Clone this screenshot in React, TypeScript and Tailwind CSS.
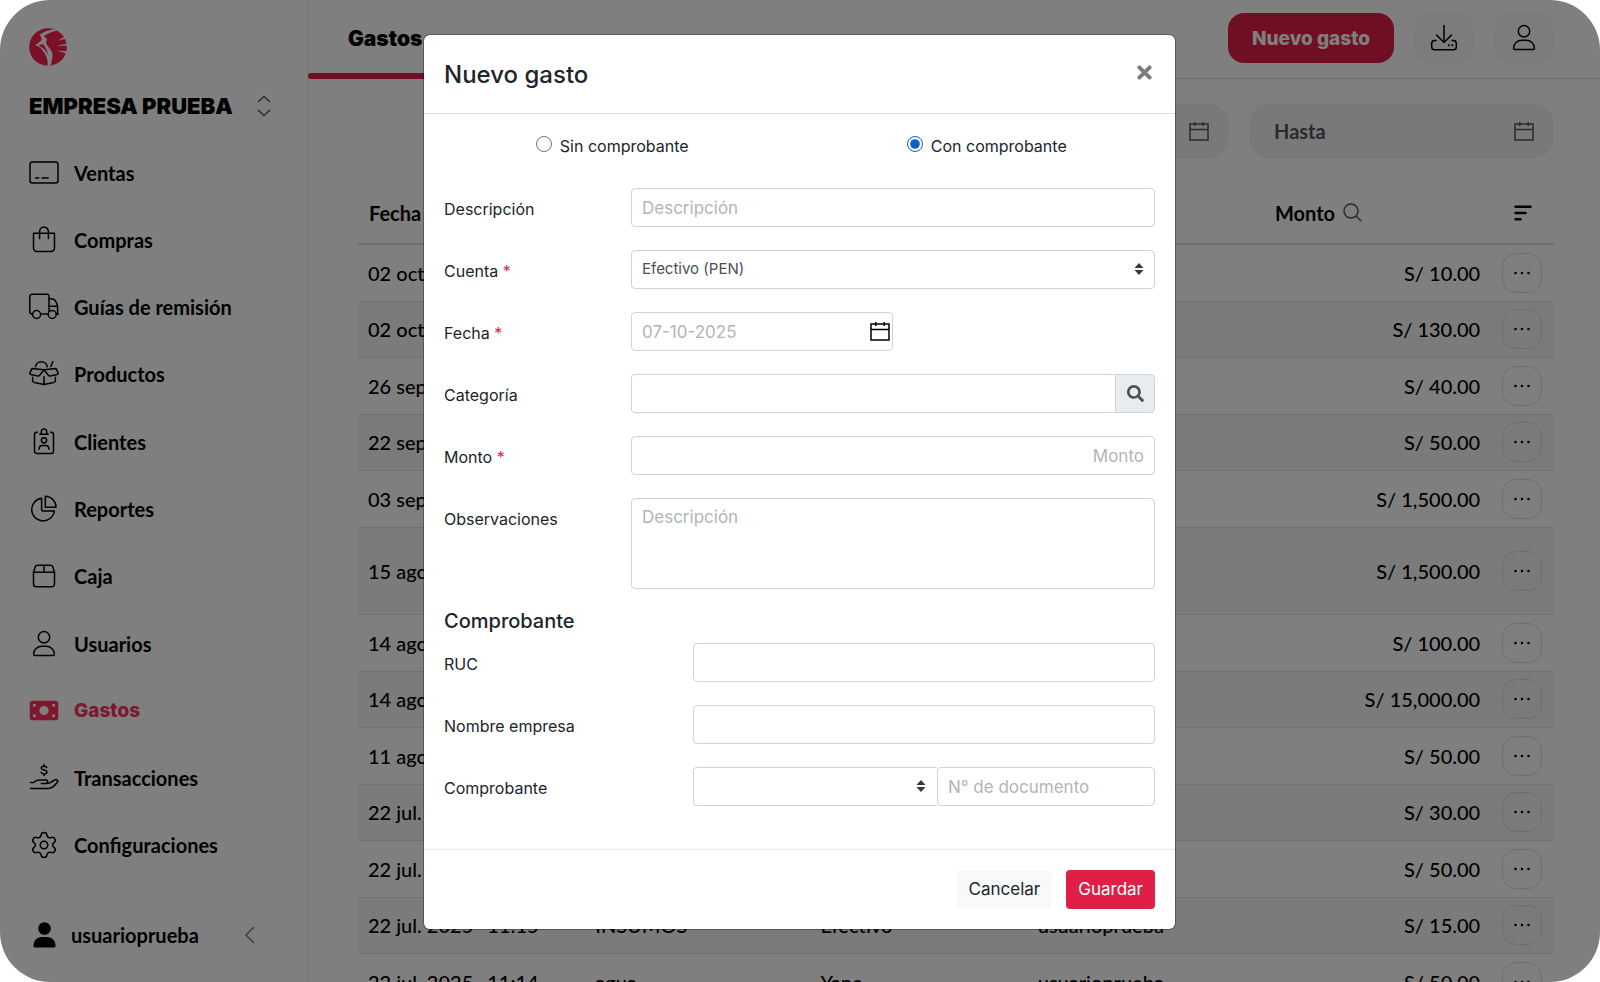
import type { ReactNode } from "react";
import { Settings } from "lucide-react";
import { FaSearch, FaTimes } from "react-icons/fa";

function Icon({ children, size = 30 }: { children: ReactNode; size?: number }) {
  return (
    <svg
      width={size}
      height={size}
      viewBox="0 0 30 30"
      fill="none"
      stroke="currentColor"
      strokeWidth={1.5}
      strokeLinecap="round"
      strokeLinejoin="round"
      className="shrink-0"
      aria-hidden
    >
      {children}
    </svg>
  );
}

const userPaths = (
  <>
    <circle cx="15" cy="8.2" r="5.7" />
    <path d="M4.6 25.2c0-4.700 3.800-8 8.400-8h4c4.600 0 8.400 3.300 8.400 8 0 .8-.6 1.400-1.400 1.400H6c-.8 0-1.400-.6-1.400-1.400z" />
  </>
);

const menu = [
  {
    label: "Ventas",
    icon: (
      <Icon>
        <rect x="1" y="4" width="28" height="21" rx="2.5" />
        <path d="M6.500 20h3.200M13 20h6.200" />
      </Icon>
    ),
  },
  {
    label: "Compras",
    icon: (
      <Icon>
        <path d="M4.500 8.300h21V23a3.500 3.500 0 0 1-3.500 3.500H8A3.500 3.500 0 0 1 4.500 23z" />
        <path d="M10.600 13.500V6.500a4.400 4.400 0 0 1 8.800 0v7" />
      </Icon>
    ),
  },
  {
    label: "Guías de remisión",
    icon: (
      <Icon>
        <path d="M3.500 22h-.6A2.400 2.400 0 0 1 .8 19.500V4.500A2.200 2.200 0 0 1 3 2.300h14.800A2.200 2.200 0 0 1 20 4.500V19.500M11.700 22h7.400" />
        <path d="M20 6.800h2.400c3.200 0 5.300 3.400 6.200 7.700v7.500M20 14.200h8.500M27.300 22h2.200" />
        <circle cx="7.600" cy="22.500" r="4" />
        <circle cx="23.200" cy="22.500" r="4" />
      </Icon>
    ),
  },
  {
    label: "Productos",
    icon: (
      <Icon>
        <path d="M6.500 7.800a5.900 5.900 0 0 1 11.700 0M23.800 2.500l-2 5" />
        <path d="M3 9.400l12 1.400-4.300 5.400a2 2 0 0 1-2 .8L1.900 15.500a1.200 1.200 0 0 1-.9-1.800z" />
        <path d="M27 9.400l-12 1.400 4.300 5.400a2 2 0 0 0 2 .8l6.800-1.500a1.200 1.200 0 0 0 .9-1.800z" />
        <path d="M3.600 18.300v3.200c0 1 .6 1.600 1.600 1.900L15 25.600l9.800-2.200c1-.3 1.600-.9 1.600-1.900v-3.200M15 17.500v8" />
      </Icon>
    ),
  },
  {
    label: "Clientes",
    icon: (
      <Icon>
        <path d="M8.500 5.300h-.7a2.300 2.300 0 0 0-2.300 2.300v16.600a2.300 2.300 0 0 0 2.300 2.300h14.400a2.300 2.300 0 0 0 2.300-2.300V7.600a2.300 2.300 0 0 0-2.300-2.300h-.7" />
        <path d="M10.800 7.300h8.400M12.300 7V4.700a2.700 2.700 0 0 1 5.400 0V7" />
        <circle cx="15" cy="13.300" r="2.600" />
        <path d="M10 22.300c0-2.300 1.500-3.700 3.500-3.700h3c2 0 3.500 1.400 3.500 3.700" />
      </Icon>
    ),
  },
  {
    label: "Reportes",
    icon: (
      <Icon>
        <path d="M12.600 4.200v11.600a1.200 1.200 0 0 0 1.200 1.200h11.600A11.400 11.400 0 1 1 12.600 4.200z" />
        <path d="M16.300 2.300A11 11 0 0 1 27 13.200H16.300z" />
      </Icon>
    ),
  },
  {
    label: "Caja",
    icon: (
      <Icon>
        <path d="M4.500 11.300h21V23a2.800 2.800 0 0 1-2.800 2.800H7.300A2.800 2.800 0 0 1 4.500 23z" />
        <path d="M4.500 11.300l1.700-5.500a2.500 2.500 0 0 1 2.300-1.600h13a2.500 2.500 0 0 1 2.300 1.600l1.700 5.500M15 4.200v7" />
      </Icon>
    ),
  },
  { label: "Usuarios", icon: <Icon>{userPaths}</Icon> },
  {
    label: "Gastos",
    active: true,
    icon: (
      <Icon>
        <rect x="1.500" y="5.500" width="27" height="18" rx="2" fill="currentColor" />
        <circle cx="15" cy="14.500" r="4.600" fill="#fff" stroke="none" />
        <path
          d="M4 8h3a3 3 0 0 1-3 3zM26 8h-3a3 3 0 0 0 3 3zM4 21h3a3 3 0 0 0-3-3zM26 21h-3a3 3 0 0 1 3-3z"
          fill="#fff"
          stroke="none"
        />
      </Icon>
    ),
  },
  {
    label: "Transacciones",
    icon: (
      <Icon>
        <path d="M15 1.500v1.600M15 11v1.600M17.800 4.700c-.5-1-1.500-1.500-2.800-1.500-1.600 0-2.800.7-2.800 1.900 0 2.600 5.700 1.200 5.700 3.900 0 1.300-1.300 2-2.900 2-1.400 0-2.500-.6-3-1.700" />
        <path d="M1.500 19.500h3.200c1.700-1.800 3.600-2.600 5.800-2.600h6.300c1.300 0 1.900.8 1.900 1.700 0 1-.7 1.800-1.900 1.800h-4.500 5.500c1.800 0 3.300-.5 4.600-1.400l3.400-2.100c1.800-1 3.700.7 2.500 2.400-2.300 3.200-4.800 6.200-9 6.200H1.500" />
      </Icon>
    ),
  },
  {
    label: "Configuraciones",
    icon: <Settings size={30} strokeWidth={1.2} className="shrink-0" aria-hidden />,
  },
];

const rows = [
  { date: "02 oct. 2025", time: "10:42", text: "Insumos", account: "Efectivo", amount: "10.00" },
  { date: "02 oct. 2025", time: "10:40", text: "Insumos", account: "Efectivo", amount: "130.00" },
  { date: "26 sep. 2025", time: "09:15", text: "Agua", account: "Yape", amount: "40.00" },
  { date: "22 sep. 2025", time: "12:30", text: "Insumos", account: "Efectivo", amount: "50.00" },
  { date: "03 sep. 2025", time: "16:05", text: "Alquiler", account: "Efectivo", amount: "1,500.00" },
  { date: "15 ago. 2025", time: "11:20", text: "Alquiler", account: "Efectivo", amount: "1,500.00", tall: true },
  { date: "14 ago. 2025", time: "17:33", text: "Insumos", account: "Efectivo", amount: "100.00" },
  { date: "14 ago. 2025", time: "17:30", text: "Equipos", account: "Efectivo", amount: "15,000.00" },
  { date: "11 ago. 2025", time: "10:12", text: "Agua", account: "Yape", amount: "50.00" },
  { date: "22 jul. 2025", time: "11:20", text: "Agua", account: "Yape", amount: "30.00" },
  { date: "22 jul. 2025", time: "11:18", text: "Insumos", account: "Efectivo", amount: "50.00" },
  { date: "22 jul. 2025", time: "11:15", text: "INSUMOS", account: "Efectivo", amount: "15.00" },
  { date: "22 jul. 2025", time: "11:14", text: "agua", account: "Yape", amount: "50.00" },
];

function CalendarIcon({ className }: { className?: string }) {
  return (
    <svg width="20" height="20" viewBox="0 0 20 20" fill="none" stroke="currentColor" strokeWidth="1.500" className={className} aria-hidden>
      <path d="M1 3h18v16H1zM1 8.500h18M5.800 1v4M14.200 1v4" />
    </svg>
  );
}

function SortArrows() {
  return (
    <svg
      width="10"
      height="12"
      viewBox="0 0 10 12"
      className="pointer-events-none absolute right-[11px] top-[13px] text-[#343a40]"
      fill="currentColor"
      aria-hidden
    >
      <path d="M.5 5h9L5.500.4a.7.7 0 0 0-1 0zM.5 7h9l-4 4.600a.7.7 0 0 1-1 0z" />
    </svg>
  );
}

function Sidebar() {
  return (
    <aside className="flex w-[308px] shrink-0 flex-col border-r border-[#e4e4e4]">
      <svg width="38" height="38" viewBox="0 0 38 38" className="ml-[29px] mt-7 shrink-0" aria-label="Logo">
        <circle cx="19" cy="19" r="18.800" fill="#f8204d" />
        <path
          d="M26 1.200C20.500 1.500 14.500 3.500 10.300 7c1.700 1.300 2.500 2.800 2.400 4.800C11.200 14 9 15.300 6 17.300c2.800.7 5 1.800 6.700 4 2.300 3 3.800 5.500 5 8.300.8 2.600 1.200 4.900.8 8.200h3.200c.7-3.800 1.800-6.800 1.800-10.800 0-2.500-1-4.500-2.500-6.300-1.200-1.700-2.800-3-3.600-4.800-.5-1.500.2-3 .5-4.900-1-1.200-2-2-3.300-2.600C18 5.500 22 4 27.500 2.800z"
          fill="#fff"
        />
        <path d="M9.500 17.600c1.500-1 3-1.500 4.800-1.600l3.200 5.500 1.800 5.500c-2.300-4.300-5-7-9.800-9.400z" fill="#f8204d" />
        <path d="M17.800 12.500c2.500 3.500 4.500 6.500 5.700 11.500-1.300-2.500-3-4.500-4.500-6.500-1-1.700-1.400-3.200-1.200-5z" fill="#f8204d" />
        <path d="M28.500 13.300c2-1.800 4.500-3.200 7.500-4.500l.9 2c-3 .4-5.600 1.200-8.400 2.500zM28 18.300c3-1.400 6-2 9.700-2.300l.1 2c-3.300-.4-6.500-.2-9.800.3zM28.500 23c3-.4 6-.2 9.200.6l-.7 2c-2.700-1.300-5.500-2.100-8.500-2.600z" fill="#fff" />
      </svg>
      <button type="button" className="mt-5 flex h-10 items-center justify-between pl-[29px] pr-9">
        <span className="font-['Inter',sans-serif] text-[22px] font-black">EMPRESA PRUEBA</span>
        <svg width="14" height="22" viewBox="0 0 14 22" fill="none" stroke="#555" strokeWidth="1.500" aria-hidden>
          <path d="M1 7l6-5.500L13 7M1 15l6 5.500 6-5.500" />
        </svg>
      </button>
      <nav className="mt-[13px] grid h-[740px] shrink-0 auto-rows-fr" aria-label="Principal">
        {menu.map(({ label, icon, active }) => (
          <a
            key={label}
            href="#"
            className={
              active
                ? "flex items-center gap-[15px] pl-[29px] font-['Inter',sans-serif] text-[19px] font-extrabold text-[#ff2e5f]"
                : "flex items-center gap-[15px] pl-[29px] text-xl font-bold"
            }
          >
            {icon}
            {label}
          </a>
        ))}
      </nav>
      <button type="button" className="mt-9 flex h-10 items-center pl-[29px] pr-[52px]">
        <svg width="30" height="30" viewBox="0 0 30 30" fill="currentColor" aria-hidden>
          <circle cx="15.500" cy="8.500" r="6.300" />
          <path d="M4.500 26c0-5.500 3.500-9 8.500-9h5c5 0 8.500 3.500 8.500 9 0 .9-.5 1.400-1.400 1.400H5.900c-.9 0-1.400-.5-1.400-1.400z" />
        </svg>
        <span className="ml-3 flex-1 text-left text-xl font-bold">usuarioprueba</span>
        <svg width="10" height="18" viewBox="0 0 10 18" fill="none" stroke="#777" strokeWidth="1.500" aria-hidden>
          <path d="M9 1L1 9l8 8" />
        </svg>
      </button>
    </aside>
  );
}

function TopBar() {
  return (
    <header className="flex h-[79px] shrink-0 items-start border-b border-[#d0d0d0]">
      <a href="#" className="flex h-[79px] w-[154px] flex-col">
        <span className="flex flex-1 items-center pl-10 pt-1 font-['Inter',sans-serif] text-[21px] font-black">Gastos</span>
        <span className="h-[6px] rounded-full bg-[#e01f47]" />
      </a>
      <div className="ml-auto mt-[13px] flex gap-5 pr-[46px]">
        <button
          type="button"
          className="h-[50px] rounded-2xl bg-[#e01f47] px-6 pt-[2px] font-['Inter',sans-serif] text-[19px] font-extrabold text-white"
        >
          Nuevo gasto
        </button>
        <button type="button" aria-label="Descargar" className="flex h-[50px] w-[60px] items-center justify-center rounded-2xl bg-[#f8f8f8]">
          <Icon>
            <path d="M15 2.500V19M7.500 12l7.500 7.500 7.500-7.500" />
            <path d="M7 17.500H5.500A3 3 0 0 0 2.700 20.500V24a2.800 2.800 0 0 0 2.800 2.800h19a2.800 2.800 0 0 0 2.800-2.800v-3.500a3 3 0 0 0-2.800-3H23" />
            <path d="M19.800 22.300h.1M23.300 22.300h.1" strokeWidth="2" />
          </Icon>
        </button>
        <button type="button" aria-label="Cuenta" className="flex h-[50px] w-[60px] items-center justify-center rounded-2xl bg-[#f8f8f8]">
          <Icon>{userPaths}</Icon>
        </button>
      </div>
    </header>
  );
}

function ExpenseTable() {
  return (
    <table className="w-full table-fixed text-left text-xl font-medium">
      <thead>
        <tr className="h-[62px] border-b-2 border-[#dcdcdc] font-bold">
          <th className="w-[19%] pl-[11px]">Fecha</th>
          <th className="w-[19%] pl-[10px]">Descripción</th>
          <th className="w-[18%] pl-[10px]">Cuenta</th>
          <th className="w-[20%] pl-[10px]">Usuario</th>
          <th className="w-[19%] pl-2">
            <span className="flex items-center gap-2">
              Monto
              <svg width="19" height="19" viewBox="0 0 19 19" fill="none" stroke="#555" strokeWidth="1.500" aria-hidden>
                <circle cx="8" cy="8" r="7" />
                <path d="M13 13l5.300 5.300" />
              </svg>
            </span>
          </th>
          <th className="w-[5%]">
            <svg width="18" height="16" viewBox="0 0 18 16" stroke="#000" strokeWidth="2.500" strokeLinecap="round" className="ml-5" aria-label="Ordenar">
              <path d="M1.500 1.800h15M1.500 8h10M1.500 14.200h5" />
            </svg>
          </th>
        </tr>
      </thead>
      <tbody>
        {rows.map((row, i) => (
          <tr
            key={i}
            className={
              row.tall
                ? "h-[87px] border-b border-[#e2e2e2] bg-[#f6f6f6]"
                : "border-b border-[#e2e2e2] odd:h-[57px] even:h-14 even:bg-[#f6f6f6]"
            }
          >
            <td className="whitespace-nowrap pl-[10px]">
              {row.date}
              <span className="ml-[14px]">{row.time}</span>
            </td>
            <td className="pl-[10px]">{row.text}</td>
            <td className="pl-2">{row.account}</td>
            <td className="pl-[10px]">usuarioprueba</td>
            <td className="pr-[14px] text-right">S/ {row.amount}</td>
            <td>
              <button
                type="button"
                aria-label="Opciones"
                className="ml-2 flex size-10 items-center justify-center rounded-[14px] border border-[#dcdcdc]"
              >
                <svg width="16" height="4" viewBox="0 0 16 4" fill="#000" aria-hidden>
                  <circle cx="1.500" cy="2" r="1.300" />
                  <circle cx="8" cy="2" r="1.300" />
                  <circle cx="14.500" cy="2" r="1.300" />
                </svg>
              </button>
            </td>
          </tr>
        ))}
      </tbody>
    </table>
  );
}

const inputClass =
  "block h-[39px] w-full rounded-[4px] border border-[#ced4da] bg-white px-[10px] text-[17px] text-[#495057] placeholder:text-[#b1b5ba] outline-none";

function Field({ label, id, required, wide, children }: { label: string; id: string; required?: boolean; wide?: boolean; children: ReactNode }) {
  return (
    <div className="flex items-start">
      <label htmlFor={id} className={wide ? "w-[249px] shrink-0 pt-[9px]" : "w-[187px] shrink-0 pt-[9px]"}>
        {label}
        {required && <span className="text-[#e01f47]"> *</span>}
      </label>
      <div className="min-w-0 flex-1">{children}</div>
    </div>
  );
}

function ExpenseModal() {
  return (
    <div
      role="dialog"
      aria-labelledby="modal-title"
      className="mx-auto w-full max-w-[751px] rounded-md bg-white font-['Inter',sans-serif] text-base text-[#212529] shadow-[0_0_0_1px_rgba(0,0,0,0.3)]"
    >
      <div className="flex h-[79px] items-center justify-between border-b border-[#dee2e6] px-5">
        <h2 id="modal-title" className="pt-[2px] text-2xl font-medium">
          Nuevo gasto
        </h2>
        <button type="button" aria-label="Cerrar" className="mb-1 text-[21px] text-[#7c7c7c]">
          <FaTimes />
        </button>
      </div>
      <form>
        <div className="px-5 pb-[43px] pt-5">
          <div className="-mx-[15px] mb-[30px] grid h-6 grid-cols-2">
            <label className="flex items-start justify-center gap-2 pr-1">
              <input type="radio" name="tipo" className="mt-[2px] size-4" />
              <span>Sin comprobante</span>
            </label>
            <label className="flex items-start justify-center gap-2 pl-1">
              <input type="radio" name="tipo" defaultChecked className="mt-[2px] size-4 accent-[#0a5fcb]" />
              <span>Con comprobante</span>
            </label>
          </div>
          <div className="flex flex-col gap-[23px]">
            <Field label="Descripción" id="descripcion">
              <input id="descripcion" placeholder="Descripción" className={inputClass} />
            </Field>
            <Field label="Cuenta" id="cuenta" required>
              <div className="relative">
                <select id="cuenta" className="block h-[39px] w-full appearance-none rounded-[4px] border border-[#ced4da] bg-white px-[10px] text-[15px] text-[#495057]">
                  <option>Efectivo (PEN)</option>
                </select>
                <SortArrows />
              </div>
            </Field>
            <Field label="Fecha" id="fecha" required>
              <div className="relative w-1/2">
                <input id="fecha" placeholder="07-10-2025" className={inputClass} />
                <CalendarIcon className="pointer-events-none absolute right-[3px] top-[9px] text-black" />
              </div>
            </Field>
            <Field label="Categoría" id="categoria">
              <div className="flex">
                <input
                  id="categoria"
                  className="h-[39px] min-w-0 flex-1 rounded-l-[4px] border border-r-0 border-[#ced4da] px-[10px] text-[17px] outline-none"
                />
                <button
                  type="button"
                  aria-label="Buscar categoría"
                  className="flex h-[39px] w-10 items-center justify-center rounded-r-[4px] border border-[#ced4da] bg-[#e9ecef] text-[17px] text-[#495057]"
                >
                  <FaSearch />
                </button>
              </div>
            </Field>
            <Field label="Monto" id="monto" required>
              <input id="monto" placeholder="Monto" className={`${inputClass} text-right`} />
            </Field>
            <Field label="Observaciones" id="observaciones">
              <textarea
                id="observaciones"
                placeholder="Descripción"
                className="block h-[91px] w-full resize-none rounded-[4px] border border-[#ced4da] px-[10px] py-[6px] text-[17px] leading-6 placeholder:text-[#b1b5ba] outline-none"
              />
            </Field>
          </div>
          <h3 className="mb-[10px] mt-5 text-xl/6 font-medium">Comprobante</h3>
          <div className="flex flex-col gap-[23px]">
            <Field label="RUC" id="ruc" wide>
              <input id="ruc" className={inputClass} />
            </Field>
            <Field label="Nombre empresa" id="empresa" wide>
              <input id="empresa" className={inputClass} />
            </Field>
            <Field label="Comprobante" id="comprobante" wide>
              <div className="flex">
                <div className="relative w-[244px] shrink-0">
                  <select
                    id="comprobante"
                    className="block h-[39px] w-full appearance-none rounded-l-[4px] border border-r-0 border-[#ced4da] bg-white px-[10px] text-[15px]"
                  />
                  <SortArrows />
                </div>
                <input aria-label="Número de documento" placeholder="N° de documento" className={inputClass} />
              </div>
            </Field>
          </div>
        </div>
        <div className="flex justify-end gap-[14px] border-t border-[#e6e8ea] p-5">
          <button type="button" className="h-[39px] rounded-[4px] bg-[#f8f9fa] px-3 text-[17px]">
            Cancelar
          </button>
          <button type="submit" className="h-[39px] rounded-[4px] bg-[#e01f47] px-3 text-[17px] text-white">
            Guardar
          </button>
        </div>
      </form>
    </div>
  );
}

export default function App() {
  return (
    <div className="relative flex h-screen overflow-hidden rounded-[50px] bg-white font-['Lato',sans-serif] text-black">
      <Sidebar />
      <main className="flex min-w-0 flex-1 flex-col">
        <TopBar />
        <div className="pl-[50px] pr-[46px] pt-[25px]">
          <div className="mb-6 flex justify-end gap-5">
            {["Desde", "Hasta"].map((label) => (
              <button
                key={label}
                type="button"
                className="flex h-[54px] w-[305px] items-center justify-between rounded-[20px] bg-[#f3f3f3] pl-[25px] pr-5 text-xl font-bold text-[#555]"
              >
                {label}
                <CalendarIcon />
              </button>
            ))}
          </div>
          <ExpenseTable />
        </div>
      </main>
      <div className="absolute inset-0 bg-black/50 pr-px pt-[35px]">
        <ExpenseModal />
      </div>
    </div>
  );
}
